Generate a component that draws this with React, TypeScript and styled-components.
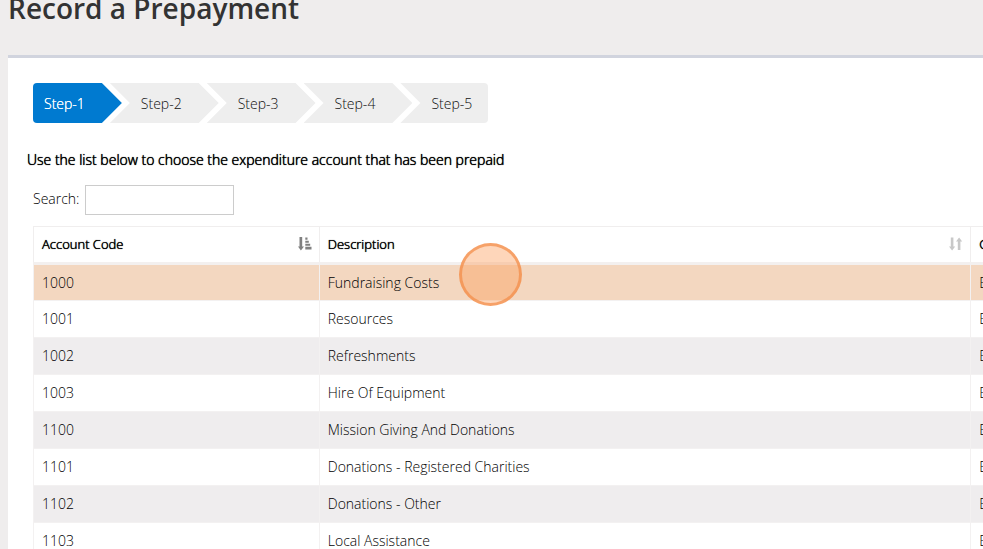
import React from "react";
import styled, { createGlobalStyle, css } from "styled-components";

const GlobalStyle = createGlobalStyle`
  *, *::before, *::after { box-sizing: border-box; }
  body {
    margin: 0;
    background: #efeded;
    color: #000;
    font-family: "Open Sans", sans-serif;
    font-size: 14px;
    font-weight: 300;
    line-height: 20px;
    overflow: hidden;
  }
  button, input { font: inherit; color: inherit; }
`;

const Page = styled.main`
  min-height: 100vh;
  padding-left: 8px;
`;

const Title = styled.h1`
  margin: -12px 0 0;
  padding-bottom: 27px;
  color: #333;
  font-size: 28px;
  font-weight: 600;
  line-height: 40px;
`;

const Panel = styled.section`
  padding: 25px 0 0 25px;
  border-top: 3px solid #d1d4de;
  background: #fff;
  overflow: hidden;
`;

const Steps = styled.ol`
  display: flex;
  margin: 0;
  padding: 0;
  list-style: none;
`;

const arrowShapes = {
  first: css`
    padding: 2px 37px 0 11px;
    border-radius: 4px 0 0 4px;
    clip-path: polygon(0 0, calc(100% - 20px) 0, 100% 50%, calc(100% - 20px) 100%, 0 100%);
  `,
  middle: css`
    padding: 2px 37px 0 31px;
    clip-path: polygon(0 0, calc(100% - 20px) 0, 100% 50%, calc(100% - 20px) 100%, 0 100%, 20px 50%);
  `,
  last: css`
    padding: 2px 16px 0 31px;
    border-radius: 0 4px 4px 0;
    clip-path: polygon(0 0, 100% 0, 100% 100%, 0 100%, 20px 50%);
  `,
};

const StepItem = styled.li`
  & + & { margin-left: -12px; }
`;

const StepButton = styled.button<{ $shape: keyof typeof arrowShapes; $active: boolean }>`
  display: block;
  height: 40px;
  border: 0;
  background: ${(p) => (p.$active ? "#007ad0" : "#eee")};
  color: ${(p) => (p.$active ? "#fff" : "#111")};
  ${(p) => p.$active && "text-shadow: 0 0 0 #fff;"}
  ${(p) => arrowShapes[p.$shape]}
`;

const strongText = css`
  color: #000;
  font-weight: 300;
  text-shadow: 0 0 0 #000, 0 0 1px #000;
`;

const Instruction = styled.p`
  margin: 27px 0 15px -6px;
  ${strongText}
`;

const SearchRow = styled.div`
  display: flex;
  gap: 6px;
  margin-bottom: 11px;
`;

const SearchLabel = styled.label`
  line-height: 28px;
`;

const SearchInput = styled.input`
  width: 149px;
  height: 30px;
  padding: 0 8px;
  border: 1px solid #ccc;
  background: #fff;
`;

const Table = styled.table`
  width: calc(100% + 194px);
  table-layout: fixed;
  border-collapse: collapse;
`;

const Col = styled.col<{ $width: string }>`
  width: ${(p) => p.$width};
`;

const HeadCell = styled.th`
  padding: 0 7px 2px 8px;
  height: 37px;
  border: 1px solid #f0eeee;
  border-bottom: 3px solid #f3f0ef;
  font-size: 13px;
  text-align: left;
  ${strongText}
`;

const HeadContent = styled.div`
  display: flex;
  align-items: center;
  justify-content: space-between;
`;

const Row = styled.tr<{ $selected: boolean }>`
  height: 37px;
  background: ${(p) => (p.$selected ? "#f3d7c0" : "#fff")};
  &:nth-child(odd) { background: ${(p) => (p.$selected ? "#f3d7c0" : "#efedee")}; }
`;

const Cell = styled.td`
  padding: 0 8px;
  border: 1px solid #f3f1f1;
`;

const ClickMarker = styled.div`
  position: absolute;
  left: 459px;
  top: 243px;
  width: 63px;
  height: 63px;
  border: 3px solid rgba(244, 140, 70, 0.7);
  border-radius: 50%;
  background: rgba(252, 157, 90, 0.42);
  pointer-events: none;
`;

const SortedIcon = () => (
  <svg width="14" height="14" viewBox="0 0 14 14" fill="#808080" aria-hidden="true">
    <path d="M1.5 0h2.7v9.5H6L2.9 13.5 0 9.5h1.5zM7.3 .5h2.2v2.2H7.3zM7.3 3.7h3.5v2H7.3zM7.3 6.7h4.9v2H7.3zM7.3 9.8h6.2v2.7H7.3z" />
  </svg>
);

const UnsortedIcon = () => (
  <svg width="14" height="14" viewBox="0 0 14 14" fill="#c8c8c8" aria-hidden="true">
    <path d="M1.8 0.5h2.6v9H6.2L3.1 13.5 0 9.5h1.8zM8.8 13h2.6V4.5h1.8L10.1 .5 7 4.5h1.8z" />
  </svg>
);

const steps = ["Step-1", "Step-2", "Step-3", "Step-4", "Step-5"];

const accounts = [
  ["1000", "Fundraising Costs"],
  ["1001", "Resources"],
  ["1002", "Refreshments"],
  ["1003", "Hire Of Equipment"],
  ["1100", "Mission Giving And Donations"],
  ["1101", "Donations - Registered Charities"],
  ["1102", "Donations - Other"],
  ["1103", "Local Assistance"],
];

export default function App() {
  return (
    <>
      <GlobalStyle />
      <Page>
        <Title>Record a Prepayment</Title>
        <Panel>
          <Steps>
            {steps.map((step, i) => (
              <StepItem key={step}>
                <StepButton
                  type="button"
                  $active={i === 0}
                  $shape={i === 0 ? "first" : i === steps.length - 1 ? "last" : "middle"}
                >
                  {step}
                </StepButton>
              </StepItem>
            ))}
          </Steps>
          <Instruction>Use the list below to choose the expenditure account that has been prepaid</Instruction>
          <SearchRow>
            <SearchLabel htmlFor="account-search">Search:</SearchLabel>
            <SearchInput id="account-search" type="text" />
          </SearchRow>
          <Table>
            <colgroup>
              <Col $width="25%" />
              <Col $width="57%" />
              <Col $width="18%" />
            </colgroup>
            <thead>
              <tr>
                <HeadCell scope="col" aria-sort="ascending">
                  <HeadContent>Account Code<SortedIcon /></HeadContent>
                </HeadCell>
                <HeadCell scope="col">
                  <HeadContent>Description<UnsortedIcon /></HeadContent>
                </HeadCell>
                <HeadCell scope="col">
                  <HeadContent>Category<UnsortedIcon /></HeadContent>
                </HeadCell>
              </tr>
            </thead>
            <tbody>
              {accounts.map(([code, description], i) => (
                <Row key={code} $selected={i === 0}>
                  <Cell>{code}</Cell>
                  <Cell>{description}</Cell>
                  <Cell>Expenditure</Cell>
                </Row>
              ))}
            </tbody>
          </Table>
        </Panel>
      </Page>
      <ClickMarker />
    </>
  );
}
